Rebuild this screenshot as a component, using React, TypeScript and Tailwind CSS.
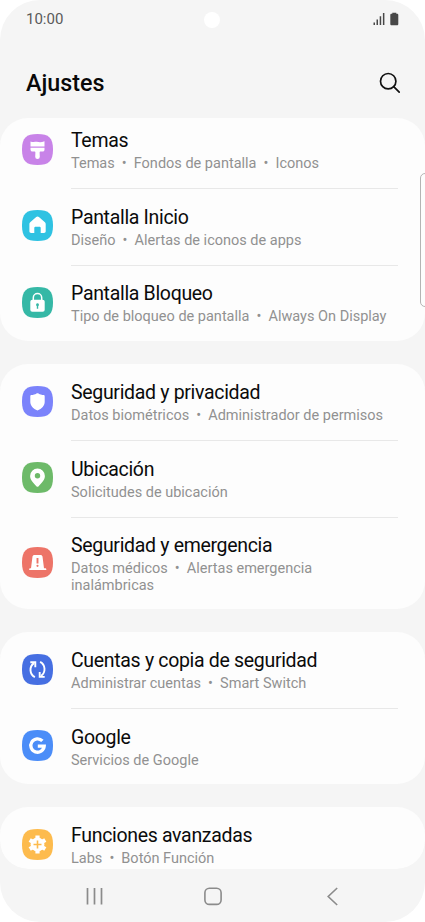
import React from 'react';

interface SettingItem {
    title: string;
    details: string[];
    secondLine?: string;
    color: string;
    icon: React.ReactNode;
}

const icons = {
    brush: (
        <>
            <path d="M8.500 7.600c1.600 1 3.400-.3 6.200.2 2.900.5 4.900.6 7.800-.6v5.400h-14z" />
            <path d="M8.500 13.800h14v1.700c0 1.400-.8 2.100-1.900 2.100h-2.200c-.5 0-.8.3-.8.8l.2 4.300a2.300 2.300 0 0 1-4.600 0l.2-4.300c0-.5-.3-.8-.8-.8h-2c-1.300 0-2.100-.8-2.100-2.100z" />
        </>
    ),
    home: (
        <path
            d="M14.200 7a2 2 0 0 1 2.700 0l6 5.300c.5.500.8 1 .8 1.700v7.300c0 1-.7 1.700-1.700 1.700h-3.300v-5c0-.8-.5-1.300-1.300-1.300h-3.800c-.8 0-1.300.5-1.300 1.300v5H9.100c-1 0-1.700-.7-1.700-1.700V14c0-.7.3-1.200.8-1.700z"
        />
    ),
    lock: (
        <>
            <path d="M11.300 14v-3.300a4.200 4.200 0 0 1 8.400 0V14" fill="none" stroke="#fff" strokeWidth="1.500" />
            <rect x="8.300" y="12.800" width="14.400" height="12" rx="2" />
            <path d="M15.500 16.300a1.500 1.500 0 0 1 .7 2.800v2.600h-1.400v-2.600a1.500 1.500 0 0 1 .7-2.800z" fill="#35b8a6" />
        </>
    ),
    shield: (
        <path d="M15.500 7.200c.4 0 .7.100 1 .3 1.600 1 3.200 1.400 5.200 1.600.6.100 1 .5 1 1.100v5.700c0 3.700-2.800 6.500-7.200 8.600-4.400-2.100-7.200-4.900-7.200-8.600v-5.700c0-.6.400-1 1-1.100 2-.2 3.600-.6 5.200-1.600.3-.2.6-.3 1-.3z" />
    ),
    pin: (
        <path
            fillRule="evenodd"
            d="M15.500 6.500a7.400 7.400 0 0 1 7.400 7.400c0 4-3.600 7.300-6.500 10.500-.5.600-1.300.6-1.800 0-2.900-3.200-6.500-6.500-6.500-10.500a7.400 7.400 0 0 1 7.400-7.400zm0 4.500a2.700 2.700 0 1 0 0 5.400 2.700 2.700 0 0 0 0-5.400z"
        />
    ),
    siren: (
        <>
            <path d="M10.500 9.600C10.700 8.500 11.500 8 12.500 8h6c1 0 1.800.5 2 1.600l1.500 11.600h1.300c.6 0 1 .5 1 1v.8H7.200v-.8c0-.5.400-1 1-1H9z" />
            <path d="M15.500 11v5.500" stroke="#ed7468" strokeWidth="1.900" />
            <circle cx="15.500" cy="18.800" r="1.100" fill="#ed7468" />
        </>
    ),
    sync: (
        <g fill="none" stroke="#fff" strokeWidth="1.900">
            <path d="M12.900 23.100a8.200 8.200 0 0 1-.9-14" />
            <path d="M8.300 8.300h5v5" />
            <path d="M18.100 7.900a8.200 8.200 0 0 1 .9 14" />
            <path d="M22.700 22.900h-5v-5" />
        </g>
    ),
    google: (
        <path d="M20.400 10.900a6.700 6.700 0 1 0 1.800 5.200h-6.400" fill="none" stroke="#fff" strokeWidth="3.300" />
    ),
    gear: (
        <>
            <circle cx="15.500" cy="15.500" r="6.900" />
            <g stroke="#fff" strokeWidth="4.200">
                <path d="M15.500 6.500v18" />
                <path d="M7.700 11l15.600 9" />
                <path d="M7.700 20l15.600-9" />
            </g>
            <path d="M15.500 11.500v8M11.500 15.500h8" stroke="#fdbb4d" strokeWidth="1.600" />
        </>
    ),
};

const displayItems: SettingItem[] = [
    { title: 'Temas', details: ['Temas', 'Fondos de pantalla', 'Iconos'], color: '#c883e8', icon: icons.brush },
    { title: 'Pantalla Inicio', details: ['Diseño', 'Alertas de iconos de apps'], color: '#2fc2e2', icon: icons.home },
    { title: 'Pantalla Bloqueo', details: ['Tipo de bloqueo de pantalla', 'Always On Display'], color: '#35b8a6', icon: icons.lock },
];

const securityItems: SettingItem[] = [
    { title: 'Seguridad y privacidad', details: ['Datos biométricos', 'Administrador de permisos'], color: '#7b83fb', icon: icons.shield },
    { title: 'Ubicación', details: ['Solicitudes de ubicación'], color: '#6dba69', icon: icons.pin },
    {
        title: 'Seguridad y emergencia',
        details: ['Datos médicos', 'Alertas emergencia'],
        secondLine: 'inalámbricas',
        color: '#ed7468',
        icon: icons.siren,
    },
];

const accountItems: SettingItem[] = [
    { title: 'Cuentas y copia de seguridad', details: ['Administrar cuentas', 'Smart Switch'], color: '#466fe2', icon: icons.sync },
    { title: 'Google', details: ['Servicios de Google'], color: '#4b8df8', icon: icons.google },
];

const advancedItems: SettingItem[] = [
    { title: 'Funciones avanzadas', details: ['Labs', 'Botón Función'], color: '#fdbb4d', icon: icons.gear },
];

const SettingRow: React.FC<{ item: SettingItem; first: boolean }> = ({ item, first }) => (
    <div className="flex items-center pl-[22px] pr-[27px]">
        <svg viewBox="0 0 31 31" className="mr-[18px] mb-[1.500px] size-[31px] shrink-0" fill="#fff">
            <path
                d="M15.500 0C27 0 31 4 31 15.500S27 31 15.500 31 0 27 0 15.500 4 0 15.500 0z"
                fill={item.color}
            />
            {item.icon}
        </svg>
        <div className={`flex-1 pb-4 ${first ? 'pt-[17px]' : 'border-t border-[#e8e8e8] pt-[16.500px]'}`}>
            <div className="text-[19.500px] leading-6 tracking-[-0.320px] text-[#0b0b0b]">{item.title}</div>
            <div className="mt-[2px] text-[14.500px] leading-[17px] text-[#919191]">
                <div className="flex">
                    {item.details.map((text, idx) => (
                        <React.Fragment key={text}>
                            {idx > 0 && <span className="w-[19px] text-center">•</span>}
                            <span>{text}</span>
                        </React.Fragment>
                    ))}
                </div>
                {item.secondLine && <div>{item.secondLine}</div>}
            </div>
        </div>
    </div>
);

const Card: React.FC<{ items: SettingItem[]; className: string }> = ({ items, className }) => (
    <section className={`shrink-0 overflow-hidden rounded-[28px] bg-[#fdfdfd] ${className}`}>
        {items.map((item, idx) => (
            <SettingRow key={item.title} item={item} first={idx === 0} />
        ))}
    </section>
);

export default function App() {
    return (
        <div className="h-[922px] w-[425px] bg-white font-['Roboto',sans-serif]">
            <div className="relative flex h-full flex-col overflow-hidden rounded-[40px] bg-[#f5f5f5]">
                {/* Status bar */}
                <div className="flex h-[38px] shrink-0 items-center justify-between pr-[26px] pl-[26px]">
                    <span className="text-[15px] text-[#5a5a5a]">10:00</span>
                    <svg width="26" height="14" viewBox="0 0 26 14" fill="#484848">
                        <path d="M.5 10.500h1.500V13H.5zM3.500 7.500H5V13H3.500zM6.700 4.300h1.500V13H6.700zM9.900 1h1.500v12H9.900z" />
                        <path d="M19.300.8h4v1h.7c.8 0 1.300.5 1.300 1.300v8.800c0 .8-.5 1.300-1.300 1.300h-5.400c-.8 0-1.300-.5-1.300-1.300V3.100c0-.8.5-1.300 1.300-1.300h.7z" />
                    </svg>
                </div>
                <div className="absolute top-3 left-[204px] size-[16px] rounded-full bg-white" />

                {/* Header */}
                <header className="flex h-20 shrink-0 items-center justify-between pt-[10px] pr-[25px] pl-[26px]">
                    <h1 className="text-[23.300px] font-medium text-[#090909]">Ajustes</h1>
                    <svg width="22" height="22" viewBox="0 0 22 22" fill="none" stroke="#111" strokeWidth="1.700" className="mb-[1px] -mr-[0.500px]">
                        <circle cx="9.200" cy="9.200" r="7.700" />
                        <path d="M14.700 14.700l5.500 5.500" strokeLinecap="round" />
                    </svg>
                </header>

                {/* Settings list */}
                <main className="flex h-[751px] shrink-0 flex-col gap-[23px] overflow-hidden rounded-b-[28px]">
                    <Card items={displayItems} className="flex h-[223px] flex-col justify-end" />
                    <Card items={securityItems} className="h-[245px]" />
                    <Card items={accountItems} className="h-[152px]" />
                    <Card items={advancedItems} className="h-[62px]" />
                </main>

                {/* Navigation bar */}
                <nav className="flex h-[53px] shrink-0 justify-between pt-[18px] pr-[86px] pl-[85px] text-[#8b8b8b]">
                    <svg width="19" height="20" viewBox="0 0 19 20" fill="none" stroke="currentColor" strokeWidth="1.700">
                        <path d="M2.500 1v16.500M9.500 1v16.500M16.500 1v16.500" />
                    </svg>
                    <svg width="20" height="20" viewBox="0 0 20 20" fill="none" stroke="currentColor" strokeWidth="1.600" className="-ml-[3px]">
                        <rect x="1.900" y="1.200" width="16.200" height="16.200" rx="4.500" />
                    </svg>
                    <svg width="14" height="20" viewBox="0 0 14 20" fill="none" stroke="currentColor" strokeWidth="1.600">
                        <path d="M12.200 1L3.200 9.500l9 8.500" />
                    </svg>
                </nav>

                {/* Edge panel handle */}
                <div className="absolute top-[173px] right-[-6px] h-[134px] w-[11px] rounded-[5px] border border-[#b4b4b4] bg-[#fdfdfd]" />
            </div>
        </div>
    );
}
